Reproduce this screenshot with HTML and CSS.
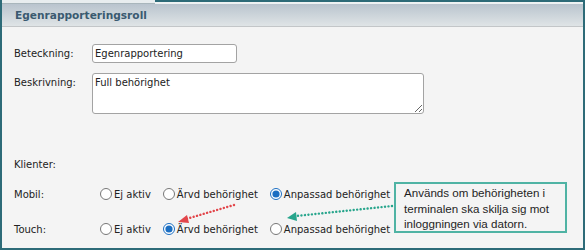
FILE: index.html
```html
<!DOCTYPE html>
<html lang="sv">
<head>
  <meta charset="UTF-8">
  <title>Egenrapporteringsroll</title>
  <link rel="stylesheet" href="styles.css">
</head>
<body>

  <div class="screen">
    <div class="frame">
      <div class="tabs">
        <span class="tab-left"></span>
        <span class="tab-rest"></span>
      </div>

      <div class="header">Egenrapporteringsroll</div>

      <div class="content">
        <div class="row">
          <label class="lbl">Beteckning:</label>
          <input class="field" type="text" value="Egenrapportering">
        </div>

        <div class="row row-top">
          <label class="lbl">Beskrivning:</label>
          <textarea class="area">Full behörighet</textarea>
        </div>

        <div class="row row-klienter">
          <label class="lbl">Klienter:</label>
        </div>

        <div class="row row-mobil">
          <label class="lbl">Mobil:</label>
          <div class="radios">
            <label class="opt"><input type="radio" name="mobil">Ej aktiv</label>
            <label class="opt"><input type="radio" name="mobil">Ärvd behörighet</label>
            <label class="opt"><input type="radio" name="mobil" checked>Anpassad behörighet</label>
          </div>
        </div>

        <div class="row row-touch">
          <label class="lbl">Touch:</label>
          <div class="radios">
            <label class="opt"><input type="radio" name="touch">Ej aktiv</label>
            <label class="opt"><input type="radio" name="touch" checked>Ärvd behörighet</label>
            <label class="opt"><input type="radio" name="touch">Anpassad behörighet</label>
          </div>
        </div>
      </div>
    </div>

    <!-- annotations drawn over the form -->
    <svg class="arrows" width="585" height="250" viewBox="0 0 585 250">
      <line x1="234" y1="205" x2="186" y2="219" stroke="#e2464b" stroke-width="2.4" stroke-dasharray="0.1 3.4" stroke-linecap="round"/>
      <polygon points="178,222 187,215 189,223" fill="#e2464b"/>
      <line x1="392" y1="206" x2="296" y2="216" stroke="#27a58c" stroke-width="2.4" stroke-dasharray="0.1 3.4" stroke-linecap="round"/>
      <polygon points="287,218 296,212 297,221" fill="#27a58c"/>
    </svg>

    <div class="callout">
      Används om behörigheten i<br>
      terminalen ska skilja sig mot<br>
      inloggningen via datorn.
    </div>
  </div>

</body>
</html>
```

FILE: styles.css
```css
body {
  margin: 0;
  padding: 0;
  background-color: #f4f4f4;
  font-family: 'DejaVu Sans', Verdana, sans-serif;
  font-size: 10px;
  color: #222;
}

.screen {
  position: relative;
  width: 585px;
  height: 250px;
  overflow: hidden;
}

.frame {
  box-sizing: border-box;
  width: 585px;
  height: 250px;
  border-left: 2px solid #2d6b78;
  border-right: 2px solid #2d6b78;
  border-bottom: 2px solid #2d6b78;
  background-color: #f4f4f4;
}

/* bottom edge of the tab strip above */
.tabs {
  display: flex;
  height: 4px;
}

.tab-left {
  width: 153px;
  background-color: #e8edef;
  border-bottom: 1px solid #a9b6bc;
}

.tab-rest {
  flex: 1;
  border-top: 2px solid #2d6b78;
  background-color: #eef2f3;
}

.header {
  height: 22px;
  line-height: 22px;
  padding-left: 13px;
  background: linear-gradient(#b9c4ce, #dfe4e6);
  border-bottom: 1px solid #c3c6c8;
  color: #3a5a70;
  font-weight: bold;
  font-size: 10.6px;
}

.content {
  padding: 17px 0 0 12px;
}

.row {
  display: flex;
  align-items: center;
}

.row-top {
  align-items: flex-start;
  margin-top: 10px;
}

.row-top .lbl {
  padding-top: 4px;
}

.row-klienter {
  height: 20px;
  margin-top: 40px;
}

.row-mobil {
  height: 20px;
  margin-top: 10px;
}

.row-touch {
  height: 20px;
  margin-top: 15px;
}

.lbl {
  width: 78px;
  flex-shrink: 0;
}

.field, .area {
  box-sizing: border-box;
  font-family: 'DejaVu Sans', Verdana, sans-serif;
  font-size: 10px;
  color: #222;
  background-color: #fff;
  border: 1px solid #a3a3a3;
  border-radius: 3px;
  outline: none;
  margin: 0;
}

.field {
  width: 145px;
  height: 19px;
  padding: 0 2px;
}

.area {
  width: 332px;
  height: 41px;
  padding: 3px 2px;
  resize: both;
}

.radios {
  display: flex;
  align-items: center;
  gap: 12px;
  padding-left: 8px;
}

.opt {
  display: flex;
  align-items: center;
}

.opt input {
  width: 12px;
  height: 12px;
  margin: 0 2px 0 0;
  accent-color: #1b6ec2;
}

.arrows {
  position: absolute;
  left: 0;
  top: 0;
}

.callout {
  position: absolute;
  left: 394px;
  top: 182px;
  box-sizing: border-box;
  width: 173px;
  height: 51px;
  padding: 1px 0 0 8px;
  border: 2px solid #4fb3a4;
  background-color: #f4f4f4;
  font-family: 'Liberation Sans', Arial, sans-serif;
  font-size: 11.6px;
  line-height: 15.5px;
  color: #1e1e1e;
}
```
